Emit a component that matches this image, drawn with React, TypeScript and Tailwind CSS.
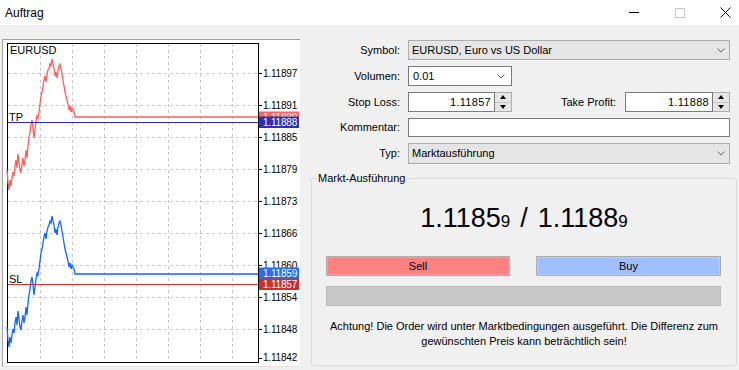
import React from 'react';

const RED_PTS: [number, number][] = [
  [7, 170], [8, 183], [9, 190], [10, 180], [11, 186], [12, 178], [13, 172], [14, 176], [15, 166], [16, 160],
  [17, 168], [18, 154], [19, 162], [20, 170], [21, 173], [22, 164], [23, 158], [24, 166], [25, 160], [26, 150],
  [27, 158], [28, 146], [29, 138], [30, 132], [31, 124], [32, 120], [33, 128], [34, 138], [35, 130], [36, 122],
  [37, 116], [38, 118], [39, 112], [40, 104], [41, 96], [42, 92], [43, 86], [44, 80], [45, 76], [46, 82],
  [47, 74], [48, 70], [49, 68], [50, 64], [51, 66], [52, 59], [53, 64], [54, 68], [55, 76], [56, 72],
  [57, 78], [58, 70], [59, 66], [60, 64], [61, 68], [62, 74], [63, 80], [64, 86], [65, 92], [66, 96],
  [67, 100], [68, 104], [69, 110], [70, 106], [71, 112], [72, 108], [73, 110], [74, 112], [75, 117], [258, 117],
];

const toPoints = (dy: number) => RED_PTS.map(([x, y]) => `${x},${y + dy}`).join(' ');

const GRID_X = [40, 72, 104, 136, 168, 200, 232];
const LEVELS: [number, string][] = [
  [73, '1.11897'], [105, '1.11891'], [137, '1.11885'], [169, '1.11879'], [201, '1.11873'],
  [233, '1.11866'], [265, '1.11860'], [297, '1.11854'], [329, '1.11848'],
];

const PriceTag = ({ y, color, text }: { y: number; color: string; text: string }) => (
  <g>
    <rect x={259} y={y} width={40} height={11.5} fill={color} />
    <text x={263} y={y + 9.5} fontSize={10} fill="#fff" letterSpacing={-0.2}>{text}</text>
  </g>
);

const Chart = () => (
  <div className="ml-[2px] mt-[14px] w-[298px] h-[328px] bg-white border-l border-t border-[#a0a0a0] border-r-0 border-b border-b-[#e3e3e3] overflow-hidden">
    <svg width={297} height={327} className="block" style={{ fontFamily: '"Liberation Sans", Arial, sans-serif' }}>
      <g transform="translate(-3,-40)">
        {GRID_X.map(x => (
          <line key={x} x1={x + 0.5} y1={44} x2={x + 0.5} y2={362} stroke="#c8c8c8" strokeDasharray="3 3" />
        ))}
        {LEVELS.map(([y]) => (
          <line key={y} x1={8} y1={y + 0.5} x2={258} y2={y + 0.5} stroke="#c8c8c8" strokeDasharray="3 3" />
        ))}
        <rect x={7.5} y={43.5} width={251} height={319} fill="none" stroke="#000" />
        {LEVELS.map(([y, t]) => (
          <g key={t}>
            <line x1={258} y1={y + 0.5} x2={262} y2={y + 0.5} stroke="#000" />
            <text x={263} y={y + 4} fontSize={10} fill="#000" letterSpacing={-0.2}>{t}</text>
          </g>
        ))}
        <line x1={258} y1={358.5} x2={262} y2={358.5} stroke="#000" />
        <text x={263} y={361} fontSize={10} fill="#000" letterSpacing={-0.2}>1.11842</text>

        <text x={10} y={54} fontSize={11} fill="#000">EURUSD</text>
        <text x={9} y={121} fontSize={11} fill="#000">TP</text>
        <text x={9} y={283} fontSize={11} fill="#000">SL</text>

        <polyline points={toPoints(0)} fill="none" stroke="#ff5c5c" strokeWidth={1.3} />
        <polyline points={toPoints(157)} fill="none" stroke="#1464ff" strokeWidth={1.3} />
        <line x1={8} y1={122.5} x2={258} y2={122.5} stroke="#2a2aa8" strokeWidth={1.2} />
        <line x1={8} y1={284.5} x2={258} y2={284.5} stroke="#c63434" strokeWidth={1.2} />

        <PriceTag y={111.5} color="#ff6464" text="1.11889" />
        <PriceTag y={116.5} color="#2f2fb0" text="1.11888" />
        <PriceTag y={267.5} color="#1e6eff" text="1.11859" />
        <PriceTag y={278.5} color="#c43333" text="1.11857" />
      </g>
    </svg>
  </div>
);

const Chevron = () => (
  <svg width={8} height={5} viewBox="0 0 8 5" className="shrink-0">
    <polyline points="0.5,0.5 4,4 7.5,0.5" fill="none" stroke="#606060" strokeWidth={1} />
  </svg>
);

const Spinner = () => (
  <div className="w-[17px] h-full flex flex-col border border-l-0 border-[#adadad] bg-[#e5e5e5]">
    <div className="flex-1 flex items-center justify-center border-b border-[#c5c5c5]">
      <svg width={6} height={4} viewBox="0 0 6 4"><polygon points="3,0 6,4 0,4" fill="#000" /></svg>
    </div>
    <div className="flex-1 flex items-center justify-center">
      <svg width={6} height={4} viewBox="0 0 6 4"><polygon points="0,0 6,0 3,4" fill="#000" /></svg>
    </div>
  </div>
);

const Label = ({ children, w = 'w-[108px] pr-[8px]' }: { children: React.ReactNode; w?: string }) => (
  <div className={`${w} shrink-0 text-right`}>{children}</div>
);

const OrderForm = () => (
  <div className="flex-1 flex flex-col pt-[15px]">
    <div className="flex flex-col gap-[6px]">
      <div className="flex items-center h-[20px]">
        <Label>Symbol:</Label>
        <div className="w-[322px] h-full flex items-center justify-between pl-[3px] pr-[4px] bg-[#e5e5e5] border border-[#adadad]">
          <span>EURUSD, Euro vs US Dollar</span>
          <Chevron />
        </div>
      </div>
      <div className="flex items-center h-[20px]">
        <Label>Volumen:</Label>
        <div className="w-[104px] h-full flex items-center justify-between pl-[4px] pr-[6px] bg-white border border-[#7a7a7a]">
          <span>0.01</span>
          <Chevron />
        </div>
      </div>
      <div className="flex items-center h-[20px]">
        <Label>Stop Loss:</Label>
        <div className="w-[87px] h-full flex items-center justify-end pr-[3px] bg-white border border-[#7a7a7a] tracking-[0.3px]">1.11857</div>
        <Spinner />
        <Label w="w-[113px] pr-[9px]">Take Profit:</Label>
        <div className="w-[88px] h-full flex items-center justify-end pr-[3px] bg-white border border-[#7a7a7a] tracking-[0.3px]">1.11888</div>
        <Spinner />
      </div>
      <div className="flex items-center h-[19px]">
        <Label>Kommentar:</Label>
        <div className="w-[322px] h-full bg-white border border-[#7a7a7a]" />
      </div>
      <div className="flex items-center h-[21px]">
        <Label>Typ:</Label>
        <div className="w-[322px] h-full flex items-center justify-between pl-[3px] pr-[4px] bg-[#e5e5e5] border border-[#adadad]">
          <span>Marktausführung</span>
          <Chevron />
        </div>
      </div>
    </div>

    <fieldset className="mt-[8px] ml-[11px] w-[426px] h-[194px] border border-[#dcdcdc] rounded-[2px] flex flex-col">
      <legend className="ml-[5px] px-[1px] leading-[13px]">Markt-Ausführung</legend>
      <div className="mt-[18px] flex justify-center items-baseline leading-[30px] text-black">
        <span className="text-[27px]">1.1185</span>
        <span className="text-[17px]">9</span>
        <span className="text-[27px] mx-[10px]">/</span>
        <span className="text-[27px]">1.1188</span>
        <span className="text-[17px]">9</span>
      </div>
      <div className="mt-[19px] mx-[14px] flex gap-[26px]">
        <div className="w-[184px] h-[20px] flex items-center justify-center bg-[#ff8080] border border-[#adadad] shadow-[inset_0_0_0_1px_#ff9a9a]">Sell</div>
        <div className="w-[185px] h-[20px] flex items-center justify-center bg-[#a0bfff] border border-[#adadad] shadow-[inset_0_0_0_1px_#b4cdff]">Buy</div>
      </div>
      <div className="mt-[10px] mx-[14px] w-[395px] h-[20px] bg-[#c8c8c8] border border-[#bcbcbc]" />
      <div className="mt-[13px] text-center leading-[15px]">
        Achtung! Die Order wird unter Marktbedingungen ausgeführt. Die Differenz zum
        <br />
        gewünschten Preis kann beträchtlich sein!
      </div>
    </fieldset>
  </div>
);

export default function App() {
  return (
    <div className="w-[739px] h-[370px] overflow-hidden bg-[#f0f0f0] flex flex-col font-['Liberation_Sans',Arial,sans-serif] text-[11px] text-black">
      <div className="h-[25px] shrink-0 bg-white flex items-center">
        <span className="pl-[5px] text-[12px]">Auftrag</span>
        <div className="ml-auto flex h-full">
          <div className="w-[46px] flex items-center justify-center">
            <div className="w-[10px] h-px bg-black" />
          </div>
          <div className="w-[45px] flex items-center justify-center">
            <div className="w-[10px] h-[10px] border border-[#c8c8c8]" />
          </div>
          <div className="w-[37px] flex items-center pl-[18px]">
            <svg width={11} height={11} viewBox="0 0 11 11">
              <path d="M0.5 0.5 L10.5 10.5 M10.5 0.5 L0.5 10.5" stroke="#000" strokeWidth={1} />
            </svg>
          </div>
        </div>
      </div>
      <div className="flex-1 flex">
        <Chart />
        <OrderForm />
      </div>
    </div>
  );
}
